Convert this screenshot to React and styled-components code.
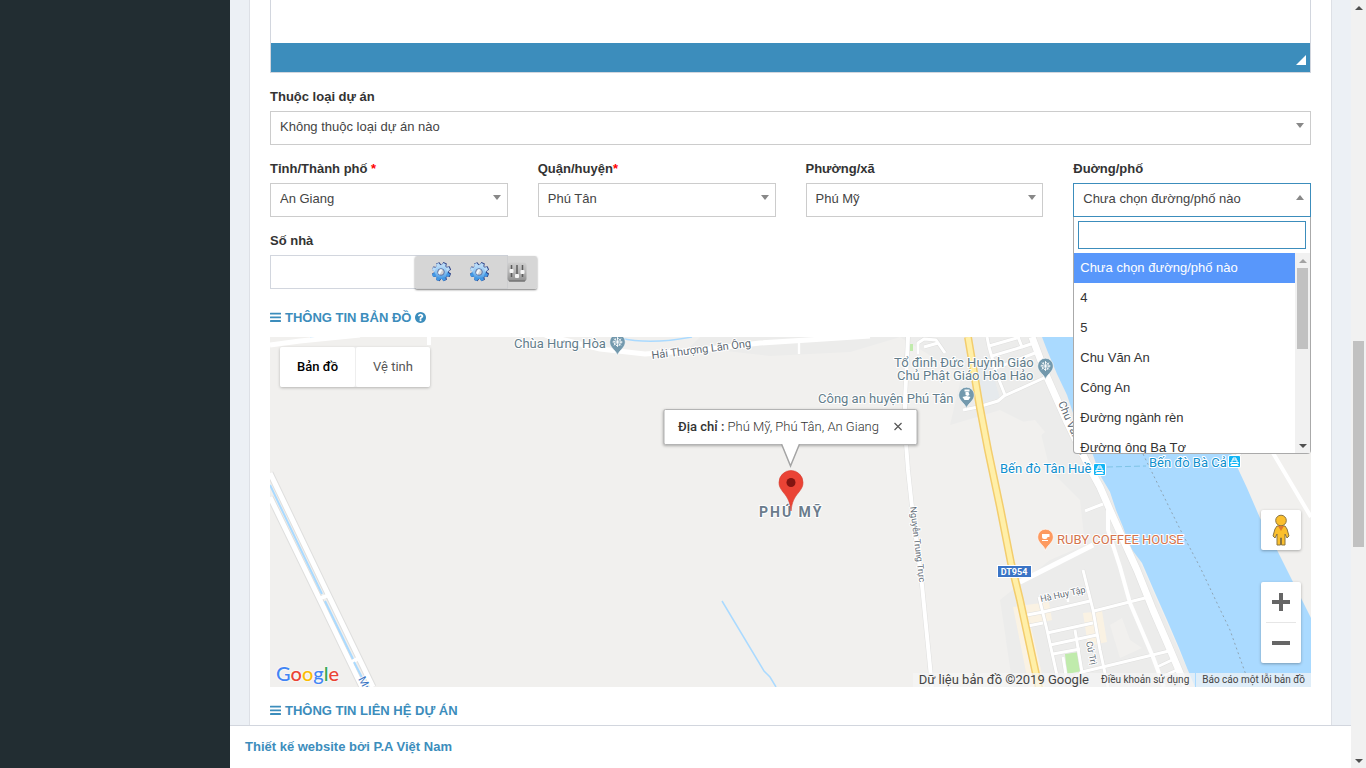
import React from 'react';
import styled, { createGlobalStyle, css } from 'styled-components';

const GlobalStyle = createGlobalStyle`
  *, *::before, *::after {
    box-sizing: border-box;
  }
  body {
    margin: 0;
    background-color: #ecf0f5;
    color: #333;
    font-family: 'Liberation Sans', Arial, sans-serif;
    font-size: 13px;
    line-height: 19px;
  }
  button, input, select, textarea {
    font: inherit;
  }
  a {
    text-decoration: none;
  }
`;

const DISTRICT_FIELDS = [
  { id: 'city', label: 'Tỉnh/Thành phố ', required: true, value: 'An Giang' },
  { id: 'district', label: 'Quận/huyện', required: true, value: 'Phú Tân' },
  { id: 'ward', label: 'Phường/xã', value: 'Phú Mỹ' },
];

const STREETS = [
  'Chưa chọn đường/phố nào',
  '4',
  '5',
  'Chu Văn An',
  'Công An',
  'Đường ngành rèn',
  'Đường ông Ba Tơ',
];

const MINOR_ROADS = [
  'M963 410L978 407L998 401L1004 396L1046 377',
  'M987 337L989 347L997 375L1005 395',
  'M989 346L1020 337',
  'M992 356L1022 347L1018 337',
  'M996 368L1040 351',
  'M1022 347L1034 343',
  'M918 354V343L924 339L936 340L945 353',
  'M924 347L938 343',
  'M799 341V354',
  'M1085 511L1103 504',
  'M1083 570L1093 610L1100 650L1108 687',
  'M1027 615L1043 612L1090 601',
  'M1039 597L1047 630L1058 680',
  'M1028 626L1043 623',
  'M1047 633L1093 623',
  'M1050 645L1097 635',
  'M1053 654L1080 649',
  'M1075 630L1082 672',
  'M1063 657L1067 682',
  'M1068 602V598',
  'M1094 611L1145 598',
  'M1067 684L1082 672L1169 651',
  'M1157 667L1172 660',
  'M1161 677L1177 670',
  'M1231 461L1246 448',
];

const Select = ({ id, value, open }) => (
  <SelectBox>
    <NativeSelect id={id} defaultValue={value} $open={open}>
      <option>{value}</option>
    </NativeSelect>
    <Arrow $up={open} />
  </SelectBox>
);

const BarsIcon = () => (
  <svg width="11" height="11" viewBox="0 0 11 11" aria-hidden="true">
    <rect y="0.700" width="11" height="1.900" rx="0.400" fill="currentColor" />
    <rect y="4.400" width="11" height="1.900" rx="0.400" fill="currentColor" />
    <rect y="8.100" width="11" height="1.900" rx="0.400" fill="currentColor" />
  </svg>
);

const QuestionIcon = () => (
  <svg width="11" height="11" viewBox="128 128 1536 1536" aria-hidden="true">
    <path
      fill="currentColor"
      d="M1024 1376v-192q0-14-9-23t-23-9h-192q-14 0-23 9t-9 23v192q0 14 9 23t23 9h192q14 0 23-9t9-23zM1280 704q0-88-55.500-163t-138.500-116-170-41q-243 0-371 213-15 24 8 42l132 100q7 6 19 6 16 0 25-12 53-68 86-92 34-24 86-24 48 0 85.500 26t37.500 59q0 38-20 61t-68 45q-63 28-115.500 86.500t-52.500 125.500v36q0 14 9 23t23 9h192q14 0 23-9t9-23q0-19 21.500-49.500t54.500-49.500q32-18 49-28.500t46-35 44.500-48 28-60.500 12.500-81zM1664 896q0 209-103 385.500t-279.500 279.500-385.500 103-385.500-103-279.500-279.500-103-385.500 103-385.500 279.500-279.500 385.500-103 385.500 103 279.500 279.500 103 385.500z"
    />
  </svg>
);

const TEETH = [22, 67, 112, 157, 202, 247, 292, 337];

const GearIcon = () => (
  <svg width="20" height="20" viewBox="-10 -10 20 20" aria-hidden="true">
    <defs>
      <linearGradient
        id="gear"
        gradientUnits="userSpaceOnUse"
        x1="0"
        y1="-9"
        x2="0"
        y2="9">
        <stop offset="0" stopColor="#cfe6fa" />
        <stop offset="0.5" stopColor="#8cc4f2" />
        <stop offset="1" stopColor="#2f8ade" />
      </linearGradient>
    </defs>
    <g fill="#2a3f86" transform="translate(0.500 -0.300)">
      {TEETH.map(a => (
        <path key={a} d="M-2.600 -6L-1.800 -9.600H1.800L2.600 -6Z" transform={`rotate(${a})`} />
      ))}
      <circle r="7" />
    </g>
    <path
      d="M0 -7A7 7 0 1 1 0 7A7 7 0 1 1 0 -7Z"
      fill="url(#gear)"
    />
    {TEETH.map(a => (
      <path
        key={a}
        d="M-2.200 -6L-1.400 -9.200H1.400L2.200 -6Z"
        fill={a > 90 && a < 270 ? '#4398e4' : '#b9dcf8'}
        transform={`rotate(${a})`}
      />
    ))}
    <circle r="3.300" fill="#d0d0d0" stroke="#5a74a8" strokeWidth="1" />
    <path d="M-1 -2.800L1.500 -2.500L-1.500 2.800L-3 1Z" fill="#f4f8fb" />
  </svg>
);

const SlidersIcon = () => (
  <svg width="20" height="20" viewBox="0 0 20 20" aria-hidden="true">
    <defs>
      <linearGradient id="plate" x1="0" y1="0" x2="0" y2="1">
        <stop offset="0" stopColor="#cfcfcf" />
        <stop offset="0.5" stopColor="#b4b4b4" />
        <stop offset="1" stopColor="#8e8e8e" />
      </linearGradient>
    </defs>
    <rect x="0.500" y="0.500" width="19" height="19" rx="3" fill="url(#plate)" />
    <path d="M2 19H18" stroke="#666" strokeWidth="1" />
    <path d="M4.500 3V15M10 3V15M15.500 3V15" stroke="#5c5c5c" strokeWidth="1.500" />
    <g fill="#f4f4f4">
      <rect x="2.500" y="7" width="4" height="4" rx="1" />
      <rect x="8" y="12" width="4" height="4" rx="1" />
      <rect x="13.500" y="8" width="4" height="4" rx="1" />
    </g>
  </svg>
);

const PlacePin = ({ x, y, color, children }) => (
  <g transform={`translate(${x} ${y})`}>
    <path
      d="M0 13.500C-1 8.500 -7.800 6 -7.800 0A7.800 7.800 0 0 1 7.800 0C7.800 6 1 8.500 0 13.500Z"
      fill={color}
      stroke="#fff"
      strokeWidth="0.600"
    />
    {children}
  </g>
);

const TempleMark = () => (
  <g stroke="#fff" fill="none">
    <circle r="3.500" strokeWidth="1.200" strokeDasharray="1.600 1" />
    <path d="M-5 0H5M0 -5V5M-3.500 -3.500L3.500 3.500M-3.500 3.500L3.500 -3.500" strokeWidth="0.800" />
  </g>
);

const Ferry = ({ x, y }) => (
  <g transform={`translate(${x} ${y})`}>
    <rect x="-1" y="-1" width="13" height="13" rx="2" fill="#fff" />
    <rect width="11" height="11" rx="1" fill="#12b5f5" />
    <path
      d="M4 4V2H7V4M3 6.500V4H8V6.500M1.500 6.500H9.500L8.500 8.500H2.500ZM1.500 9.500H9.500"
      fill="none"
      stroke="#fff"
      strokeWidth="1"
    />
  </g>
);

const Terrain = () => (
  <MapCanvas
    viewBox="270 337 1041 350"
    preserveAspectRatio="xMidYMid slice"
    aria-label="Bản đồ Phú Mỹ"
    role="img">
    <rect x="270" y="337" width="1041" height="350" fill="#f1f0ee" />
    <path
      d="M700 337H1042L1093 455L1195 687H1013L1000 600L1050 560L1085 545L1080 500L1050 470L1040 430L1000 410L950 425L962 375L900 337L850 352L770 356L690 347Z"
      fill="#ececeb"
    />
    <path d="M968 365H990L1000 398L978 404Z" fill="#e6eaed" />
    <path
      d="M1000 425L1035 420L1045 432L1030 445L1045 470L1012 480L1000 465ZM1110 625L1122 618L1130 640L1142 648L1120 658Z"
      fill="#f1f0ee"
    />
    <path
      d="M1042 337L1047 350L1057 374L1067 395L1073 413L1093 455L1100 475L1110 492L1116 510L1123 527L1130 547L1142 563L1155 593L1167 620L1179 648L1187 668L1195 687H1311V618L1293 582L1277 550L1260 518L1247 488L1233 458L1180 337Z"
      fill="#aadaff"
    />
    <path
      d="M1013 607L1026 605L1045 687H1029ZM1026 605L1049 602L1052 620L1031 625ZM1083 613L1102 611L1107 642L1088 646Z"
      fill="#faf2e3"
    />
    <path d="M1065 654L1079 652L1082 671L1067 674Z" fill="#c0ebac" />
    <path d="M910 344H913V351H910Z" fill="#c0ebac" />
    <path
      d="M310 337H322M620 338Q650 345 692 337M722 601L764 671L770 677L776 687"
      fill="none"
      stroke="#aadaff"
      strokeWidth="1.500"
    />

    <g fill="none" stroke="#dfdfde" strokeLinejoin="round">
      <path d="M270 473L327 592L373 687M270 497L319 598L362 687" strokeWidth="7" />
      <path d="M1032 337L1047 377L1067 422L1087 463L1100 487L1113 517L1137 570L1153 610L1169 647L1186 687" strokeWidth="8" />
      <path d="M908 337L905 400L905 430L908 470L912 507L922 585L932 687" strokeWidth="5" />
      {MINOR_ROADS.map(d => (
        <path key={d} d={d} strokeWidth="4" />
      ))}
    </g>
    <g fill="none" stroke="#fff" strokeLinejoin="round">
      <path d="M270 345L300 341L360 335M545 335L600 349L645 354L700 350L760 343L870 336" strokeWidth="5" />
      <path d="M429 337V345M1273 453L1311 517" strokeWidth="4" />
      <path d="M270 473L327 592L373 687M270 497L319 598L362 687" strokeWidth="5" />
      <path d="M321 598L329 595M350 663L359 658" strokeWidth="4" />
      <path d="M1032 337L1047 377L1067 422L1087 463L1100 487L1113 517L1137 570L1153 610L1169 647L1186 687" strokeWidth="7" />
      <path d="M908 337L905 400L905 430L908 470L912 507L922 585L932 687" strokeWidth="4" />
      <path d="M1108 510V530L1120 567L1130 603L1153 657L1164 687" strokeWidth="4" />
      <path d="M1020 582L1093 545" strokeWidth="5" />
      {MINOR_ROADS.map(d => (
        <path key={d} d={d} strokeWidth="3" />
      ))}
    </g>
    <path d="M270 485L322 594M325 601L353 659M354 662L367 687" stroke="#aadaff" strokeWidth="2" fill="none" />
    <g fill="none" strokeLinejoin="round">
      <path d="M968 337L980 408L988 450L1000 507L1011 563L1020 600L1039 688" stroke="#f3cd6d" strokeWidth="8" />
      <path d="M968 337L980 408L988 450L1000 507L1011 563L1020 600L1039 688" stroke="#ffefa8" strokeWidth="5" />
    </g>
    <path
      d="M1143 454L1172 513L1182 533L1200 567L1217 603L1230 630L1246 675"
      fill="none"
      stroke="#8fa5b5"
      strokeDasharray="2 3"
    />
    <path d="M1107 467L1146 466" stroke="#7fc4e6" strokeDasharray="6 3" />

    <PlacePin x={617.5} y={342} color="#7399ad"><TempleMark /></PlacePin>
    <PlacePin x={1045.5} y={366} color="#7399ad"><TempleMark /></PlacePin>
    <PlacePin x={966.5} y={395} color="#7399ad">
      <path d="M-2 -5.500H3V-3.500H-2ZM-1 -3H2L3 0L1 1L-1 0ZM-4 2L0 1L4 2L2 5H-2Z" fill="#fff" />
    </PlacePin>
    <PlacePin x={1045.5} y={537} color="#fd9a60">
      <path d="M-3.500 -3H4V0H2Q2 2 0 2H-1.500Q-3.500 2 -3.500 0ZM-3.500 3H2.500V4H-3.500Z" fill="#fff" />
    </PlacePin>
    <Ferry x={1094} y={464} />
    <Ferry x={1229} y={456} />

    <Place x="514" y="348">Chùa Hưng Hòa</Place>
    <Place x="894" y="367">Tổ đình Đức Huỳnh Giáo</Place>
    <Place x="897" y="380">Chủ Phật Giáo Hòa Hảo</Place>
    <Place x="818" y="403">Công an huyện Phú Tân</Place>
    <Place x="1000" y="473" $color="#0f8fce">Bến đò Tân Huề</Place>
    <Place x="1149" y="467" $color="#0f8fce">Bến đò Bà Cả</Place>
    <Place x="1057" y="544" $color="#d4734b">RUBY COFFEE HOUSE</Place>
    <Town x="759" y="517">PHÚ MỸ</Town>
    <Road transform="translate(652 359) rotate(-7)" $big>Hải Thượng Lãn Ông</Road>
    <Road transform="translate(1058 403) rotate(67)" $big>Chu Văn An</Road>
    <Road transform="translate(910 507) rotate(83)">Nguyễn Trung Trực</Road>
    <Road transform="translate(1041 602) rotate(-12)">Hà Huy Tập</Road>
    <Road transform="translate(1086 642) rotate(78)">Cứ Trị</Road>
    <Road transform="translate(358 679) rotate(62)" $big $color="#3f78c4">Mương</Road>
    <rect x="997.500" y="565.500" width="34" height="12" fill="#3a74c6" stroke="#fff" />
    <Shield x="1014" y="575">DT954</Shield>
  </MapCanvas>
);

const Marker = () => (
  <MarkerIcon width="26" height="42" viewBox="0 0 26 42" aria-hidden="true">
    <path
      d="M13 41C12 32 10 28 5 22C2 18 1 16 1 12.500A12 12 0 0 1 25 12.500C25 16 24 18 21 22C16 28 14 32 13 41Z"
      fill="#ea4335"
      stroke="#d33b2d"
      strokeWidth="0.600"
    />
    <circle cx="13" cy="12.500" r="4.500" fill="#811411" />
  </MarkerIcon>
);

const Pegman = () => (
  <svg width="18" height="32" viewBox="0 0 18 32" aria-hidden="true">
    <g fill="#fbbf2d" stroke="#8a7440" strokeWidth="1">
      <path d="M5 12H13L15 15L17 22L15 24L13 20V31H9.500V24H8.500V31H5V20L3 24L1 22L3 15Z" />
      <circle cx="9" cy="6.500" r="5.300" />
    </g>
    <path d="M6 12H12L9 17Z" fill="#e07a2c" />
  </svg>
);

const App = () => {
  return (
    <>
      <GlobalStyle />
      <Page>
        <Sidebar />
        <Main>
          <Content>
            <Card>
              <Editor>
                <EditorArea aria-label="Nội dung" />
                <StatusBar>
                  <Resizer />
                </StatusBar>
              </Editor>
              <Field>
                <Label htmlFor="category">Thuộc loại dự án</Label>
                <Select id="category" value="Không thuộc loại dự án nào" />
              </Field>
              <Columns>
                {DISTRICT_FIELDS.map(field => (
                  <Field key={field.id}>
                    <Label htmlFor={field.id}>
                      {field.label}
                      {field.required && <Required>*</Required>}
                    </Label>
                    <Select id={field.id} value={field.value} />
                  </Field>
                ))}
                <Field>
                  <Label htmlFor="street">Đuờng/phố</Label>
                  <Select id="street" value={STREETS[0]} open />
                  <Dropdown>
                    <Search type="text" aria-label="Đuờng/phố" />
                    <ListWrap>
                      <List role="listbox">
                        {STREETS.map((street, i) => (
                          <Option
                            key={street}
                            role="option"
                            aria-selected={i === 0}
                            $active={i === 0}>
                            {street}
                          </Option>
                        ))}
                      </List>
                      <Track>
                        <ScrollArrow $up $muted />
                        <ListThumb />
                        <ScrollArrow />
                      </Track>
                    </ListWrap>
                  </Dropdown>
                </Field>
                <Field>
                  <Label htmlFor="house">Số nhà</Label>
                  <TextInput id="house" type="text" />
                  <InputTools>
                    <ToolButton type="button" aria-label="Telex">
                      <GearIcon />
                    </ToolButton>
                    <ToolButton type="button" aria-label="VNI">
                      <GearIcon />
                    </ToolButton>
                    <ToolButton type="button" aria-label="Tùy chọn">
                      <SlidersIcon />
                    </ToolButton>
                  </InputTools>
                </Field>
              </Columns>
              <SectionTitle>
                <BarsIcon />
                THÔNG TIN BẢN ĐỒ
                <QuestionIcon />
              </SectionTitle>
              <Map>
                <Terrain />
                <Marker />
                <InfoWindow>
                  <InfoText>
                    <b>Địa chỉ :</b> Phú Mỹ, Phú Tân, An Giang
                  </InfoText>
                  <CloseButton type="button" aria-label="Đóng">
                    <svg width="9" height="9" viewBox="0 0 9 9" aria-hidden="true">
                      <path d="M1 1L8 8M8 1L1 8" stroke="#555" strokeWidth="1.200" />
                    </svg>
                  </CloseButton>
                  <Tail width="24" height="26" viewBox="0 0 24 26" aria-hidden="true">
                    <path d="M3 1L12 23L21 1" fill="#fff" stroke="#a5a5a5" strokeWidth="1.500" />
                    <path d="M2 0H22V1H2Z" fill="#fff" />
                  </Tail>
                </InfoWindow>
                <MapTypes>
                  <MapType type="button" $active>Bản đồ</MapType>
                  <MapType type="button">Vệ tinh</MapType>
                </MapTypes>
                <MapControls>
                  <ControlButton type="button" aria-label="Chế độ xem phố">
                    <Pegman />
                  </ControlButton>
                  <ZoomGroup>
                    <ZoomButton type="button" aria-label="Phóng to">
                      <svg width="18" height="18" viewBox="0 0 18 18" aria-hidden="true">
                        <path d="M7 0H11V7H18V11H11V18H7V11H0V7H7Z" fill="#666" />
                      </svg>
                    </ZoomButton>
                    <ZoomDivider />
                    <ZoomButton type="button" aria-label="Thu nhỏ">
                      <svg width="18" height="4" viewBox="0 0 18 4" aria-hidden="true">
                        <path d="M0 0H18V4H0Z" fill="#666" />
                      </svg>
                    </ZoomButton>
                  </ZoomGroup>
                </MapControls>
                <GoogleLogo href="#google" aria-label="Google">
                  <Letter $color="#4285f4">G</Letter>
                  <Letter $color="#ea4335">o</Letter>
                  <Letter $color="#fbbc05">o</Letter>
                  <Letter $color="#4285f4">g</Letter>
                  <Letter $color="#34a853">l</Letter>
                  <Letter $color="#ea4335">e</Letter>
                </GoogleLogo>
                <Credits>
                  <Copyright>Dữ liệu bản đồ ©2019 Google</Copyright>
                  <CreditLink href="#terms">Điều khoản sử dụng</CreditLink>
                  <CreditLink href="#report" $divided>Báo cáo một lỗi bản đồ</CreditLink>
                </Credits>
              </Map>
              <SectionTitle>
                <BarsIcon />
                THÔNG TIN LIÊN HỆ DỰ ÁN
              </SectionTitle>
            </Card>
          </Content>
          <Footer>
            <FooterLink href="#pavietnam">Thiết kế website bởi P.A Việt Nam</FooterLink>
          </Footer>
        </Main>
        <PageTrack>
          <ScrollArrow $up />
          <PageThumb />
          <ScrollArrow />
        </PageTrack>
      </Page>
    </>
  );
};

export default App;

const Page = styled.div`
  display: grid;
  grid-template-columns: 230px 1fr 15px;
  height: 100vh;
  overflow: hidden;
`;
const Sidebar = styled.aside`
  background-color: #222d32;
`;
const Main = styled.main`
  display: flex;
  flex-direction: column;
  min-width: 0;
  min-height: 0;
`;
const Content = styled.div`
  flex: 1;
  min-height: 0;
  overflow: hidden;
  padding: 0 19px;
`;
const Card = styled.form`
  min-height: 100%;
  padding: 0 20px;
  background-color: #fff;
  border: solid #dde0e6;
  border-width: 0 1px;
`;
const Footer = styled.footer`
  padding: 11px 15px;
  background-color: #fff;
  border-top: 1px solid #d2d6de;
  line-height: 20px;
`;
const FooterLink = styled.a`
  color: #3c8dbc;
  font-weight: bold;
`;

const Editor = styled.div`
  margin-bottom: 14px;
  border: 1px solid #d2d6de;
  border-top: none;
`;
const EditorArea = styled.textarea`
  display: block;
  width: 100%;
  height: 43px;
  padding: 10px;
  border: none;
  outline: none;
  resize: none;
`;
const StatusBar = styled.div`
  display: flex;
  align-items: flex-end;
  justify-content: flex-end;
  height: 29px;
  padding: 7px 4px;
  background-color: #3c8dbc;
`;
const Resizer = styled.span`
  border-bottom: 10px solid #fff;
  border-left: 10px solid transparent;
`;

const Columns = styled.div`
  display: grid;
  grid-template-columns: repeat(4, 1fr);
  column-gap: 30px;
`;
const Field = styled.div`
  position: relative;
  display: flex;
  flex-direction: column;
  gap: 5px;
  min-width: 0;
  margin-bottom: 14px;
`;
const Label = styled.label`
  font-weight: bold;
`;
const Required = styled.span`
  color: #f00;
`;
const SelectBox = styled.div`
  position: relative;
`;
const NativeSelect = styled.select`
  display: block;
  width: 100%;
  height: 34px;
  padding: 0 24px 4px 9px;
  appearance: none;
  background-color: #fff;
  border: 1px solid ${({ $open }) => ($open ? '#3c8dbc' : '#ccc')};
  border-radius: 0;
  outline: none;
  color: #444;
`;
const Arrow = styled.span`
  position: absolute;
  top: 12px;
  right: 7px;
  border: solid transparent;
  border-width: ${({ $up }) => ($up ? '0 4px 5px' : '5px 4px 0')};
  border-top-color: #888;
  border-bottom-color: #888;
  pointer-events: none;
`;
const TextInput = styled.input`
  width: 100%;
  height: 34px;
  padding: 6px 12px;
  border: 1px solid #d2d6de;
  outline: none;
`;
const InputTools = styled.div`
  position: absolute;
  right: -29px;
  bottom: 0;
  display: flex;
  gap: 18px;
  align-items: center;
  height: 33px;
  padding: 0 10px 2px 16px;
  background-color: rgba(204, 204, 204, 0.8);
  border-radius: 2px;
  box-shadow: 0 1px 2px rgba(0, 0, 0, 0.5);
`;
const ToolButton = styled.button`
  display: flex;
  padding: 0;
  background: none;
  border: none;
  cursor: pointer;
`;

const Dropdown = styled.div`
  position: absolute;
  top: 58px;
  left: 0;
  z-index: 5;
  width: 100%;
  padding-top: 4px;
  background-color: #fff;
  border: 1px solid #aaa;
  border-top: none;
  border-radius: 0 0 4px 4px;
`;
const Search = styled.input`
  display: block;
  width: calc(100% - 8px);
  height: 28px;
  margin: 0 4px 4px;
  padding: 4px;
  border: 1px solid #3c8dbc;
  outline: none;
`;
const ListWrap = styled.div`
  display: flex;
  height: 200px;
  overflow: hidden;
`;
const List = styled.ul`
  flex: 1;
  margin: 0;
  padding: 0;
  list-style: none;
`;
const Option = styled.li`
  height: 30px;
  padding: 6px;
  line-height: 18px;
  ${({ $active }) =>
    $active &&
    css`
      background-color: #5897fb;
      color: #fff;
    `}
`;
const Track = styled.div`
  display: flex;
  flex-direction: column;
  align-items: center;
  width: 15px;
  background-color: #f1f1f1;
`;
const PageTrack = styled(Track)`
  height: 100%;
`;
const ScrollArrow = styled.span`
  display: flex;
  align-items: center;
  justify-content: center;
  height: 15px;
  flex: none;
  &::after {
    content: '';
    border: solid transparent;
    border-width: ${({ $up }) => ($up ? '0 4px 4px' : '4px 4px 0')};
    border-top-color: ${({ $muted }) => ($muted ? '#a3a3a3' : '#505050')};
    border-bottom-color: ${({ $muted }) => ($muted ? '#a3a3a3' : '#505050')};
  }
`;
const ListThumb = styled.span`
  width: 11px;
  height: 81px;
  margin-bottom: auto;
  background-color: #c1c1c1;
`;
const PageThumb = styled.span`
  width: 11px;
  height: 206px;
  margin: 326px 0 auto;
  background-color: #c1c1c1;
`;

const SectionTitle = styled.h4`
  display: flex;
  align-items: center;
  gap: 4px;
  margin: 5px 0 10px;
  color: #3c8dbc;
  font-size: 13px;
`;

const Map = styled.div`
  position: relative;
  height: 350px;
  margin-bottom: 14px;
  overflow: hidden;
  font-family: Roboto, sans-serif;
`;
const MapCanvas = styled.svg`
  display: block;
  width: 100%;
  height: 100%;
`;
const halo = css`
  font-family: Roboto, sans-serif;
  paint-order: stroke;
  stroke: #fff;
  stroke-width: 2px;
  stroke-linejoin: round;
`;
const Place = styled.text`
  ${halo}
  font-size: 13px;
  fill: ${({ $color }) => $color || '#637d8b'};
`;
const Town = styled.text`
  ${halo}
  font-size: 14px;
  font-weight: 700;
  letter-spacing: 2px;
  fill: #6b7c8c;
`;
const Road = styled.text`
  ${halo}
  font-size: ${({ $big }) => ($big ? '11px' : '9px')};
  fill: ${({ $color }) => $color || '#5f6b75'};
`;
const Shield = styled.text`
  font-family: Roboto, sans-serif;
  font-size: 9px;
  font-weight: 700;
  text-anchor: middle;
  fill: #fff;
`;
const MarkerIcon = styled.svg`
  position: absolute;
  top: 133px;
  left: calc(50% - 13px);
`;
const InfoWindow = styled.div`
  position: absolute;
  bottom: 242px;
  left: 50%;
  display: flex;
  align-items: center;
  gap: 15px;
  height: 36px;
  padding: 0 14px 2px;
  transform: translateX(-50%);
  background-color: #fff;
  border: 1px solid #b4b4b4;
  border-radius: 2px;
  box-shadow: 0 1px 3px rgba(0, 0, 0, 0.3);
  white-space: nowrap;
`;
const InfoText = styled.span`
  font-weight: 300;
  b {
    font-weight: 500;
  }
`;
const CloseButton = styled.button`
  display: flex;
  padding: 0;
  background: none;
  border: none;
  cursor: pointer;
`;
const Tail = styled.svg`
  position: absolute;
  top: 33px;
  left: calc(50% - 12px);
`;
const MapTypes = styled.div`
  position: absolute;
  top: 10px;
  left: 10px;
  display: flex;
  gap: 1px;
  background-color: #eee;
  border-radius: 2px;
  box-shadow: 0 1px 3px rgba(0, 0, 0, 0.25);
`;
const MapType = styled.button`
  height: 40px;
  padding: 0 17px 2px;
  background-color: #fff;
  border: none;
  border-radius: 2px;
  color: ${({ $active }) => ($active ? '#000' : '#565656')};
  font-weight: ${({ $active }) => ($active ? 500 : 400)};
  cursor: pointer;
`;
const MapControls = styled.div`
  position: absolute;
  right: 10px;
  bottom: 24px;
  display: flex;
  flex-direction: column;
  gap: 32px;
`;
const ControlButton = styled.button`
  display: flex;
  align-items: center;
  justify-content: center;
  width: 40px;
  height: 40px;
  padding: 0;
  background-color: #fff;
  border: none;
  border-radius: 2px;
  box-shadow: 0 1px 3px rgba(0, 0, 0, 0.3);
  cursor: pointer;
`;
const ZoomGroup = styled.div`
  display: flex;
  flex-direction: column;
  align-items: center;
  background-color: #fff;
  border-radius: 2px;
  box-shadow: 0 1px 3px rgba(0, 0, 0, 0.3);
`;
const ZoomButton = styled(ControlButton)`
  background: none;
  box-shadow: none;
`;
const ZoomDivider = styled.span`
  width: 30px;
  height: 1px;
  background-color: #e6e6e6;
`;
const GoogleLogo = styled.a`
  position: absolute;
  bottom: 1px;
  left: 6px;
  font-family: Lato, sans-serif;
  font-size: 20px;
  font-weight: 500;
  line-height: 26px;
  text-shadow: 0 0 2px #fff, 0 0 2px #fff;
`;
const Letter = styled.span`
  color: ${({ $color }) => $color};
`;
const Credits = styled.div`
  position: absolute;
  right: 0;
  bottom: 0;
  display: flex;
  height: 14px;
  background-color: rgba(245, 245, 245, 0.7);
  line-height: 14px;
`;
const Copyright = styled.span`
  padding: 0 6px;
  color: #444;
`;
const CreditLink = styled.a`
  padding: 0 6px;
  border-left: ${({ $divided }) => ($divided ? '1px solid #aadaff' : 'none')};
  color: #444;
  font-size: 10px;
`;
